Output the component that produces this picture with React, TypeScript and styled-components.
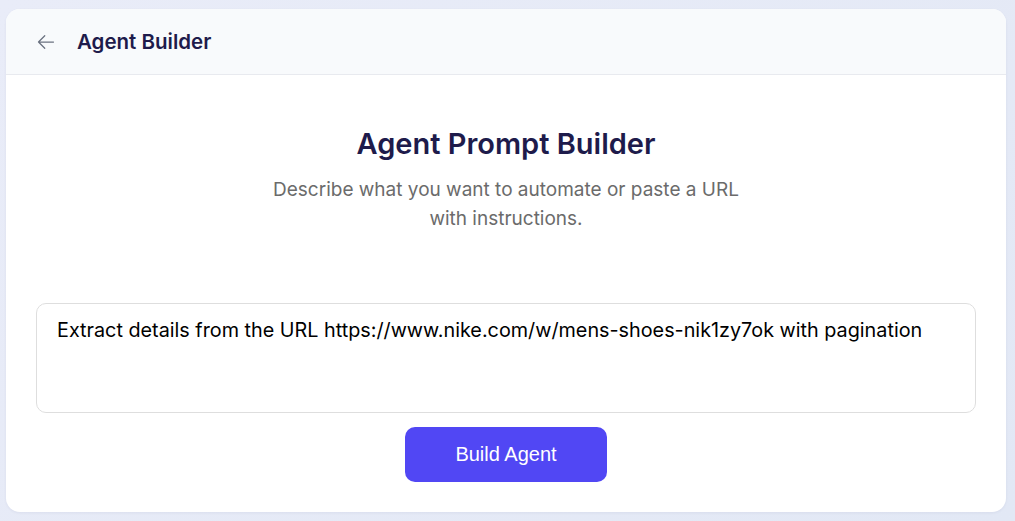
import React, { useState } from 'react';
import styled, { createGlobalStyle } from 'styled-components';

const GlobalStyle = createGlobalStyle`
  * {
    box-sizing: border-box;
  }

  html, body {
    margin: 0;
    padding: 0;
    height: 100%;
  }

  body {
    font-family: Inter, "Noto Sans", sans-serif;
    background: linear-gradient(135deg, #e9ecf8 0%, #e2e8f5 100%);
  }
`;

const Page = styled.div`
  min-height: 521px;
  padding: 9px 9px 9px 6px;
  display: flex;
`;

const Card = styled.div`
  flex: 1;
  display: flex;
  flex-direction: column;
  background: #ffffff;
  border-radius: 14px;
  overflow: hidden;
  box-shadow: 0 1px 3px rgba(30, 41, 90, 0.06);
`;

const Header = styled.header`
  height: 66px;
  display: flex;
  align-items: center;
  gap: 21px;
  padding: 0 30px;
  background: #f8fafc;
  border-bottom: 1px solid #e8eaef;
`;

const BackButton = styled.button`
  display: flex;
  align-items: center;
  justify-content: center;
  padding: 0;
  border: none;
  background: none;
  color: #6b7280;
  cursor: pointer;
`;

const HeaderTitle = styled.h1`
  margin: 0;
  font-size: 20.5px;
  font-weight: 600;
  color: #1e1b4b;
`;

const Body = styled.main`
  display: flex;
  flex-direction: column;
  align-items: center;
  padding: 52px 30px 30px;
`;

const Title = styled.h2`
  margin: 0;
  font-size: 29px;
  line-height: 34px;
  font-weight: 600;
  color: #1e1b4b;
`;

const Subtitle = styled.p`
  margin: 14px 0 0;
  max-width: 500px;
  text-align: center;
  font-size: 19px;
  line-height: 29px;
  color: #6b6b6b;
`;

const PromptInput = styled.textarea`
  width: 100%;
  height: 110px;
  margin-top: 70px;
  padding: 14px 20px;
  border: 1px solid #dedede;
  border-radius: 10px;
  resize: none;
  outline: none;
  font-family: Inter, "Noto Sans", sans-serif;
  font-size: 19.8px;
  line-height: 24px;
  color: #000000;
  background: #ffffff;
`;

const BuildButton = styled.button`
  margin-top: 14px;
  width: 202px;
  height: 55px;
  border: none;
  border-radius: 10px;
  background: #5147f4;
  color: #ffffff;
  font-family: "Liberation Sans", Arial, sans-serif;
  font-size: 20px;
  cursor: pointer;
`;

const ArrowLeft = () => (
  <svg width="20" height="20" viewBox="0 0 24 24" fill="none" stroke="currentColor" strokeWidth={1.5}>
    <path strokeLinecap="round" strokeLinejoin="round" d="M10.5 19.5 3 12m0 0 7.5-7.5M3 12h18" />
  </svg>
);

const App: React.FC = () => {
  const [prompt, setPrompt] = useState(
    'Extract details from the URL https://www.nike.com/w/mens-shoes-nik1zy7ok with pagination'
  );

  return (
    <>
      <GlobalStyle />
      <Page>
        <Card>
          <Header>
            <BackButton aria-label="Back">
              <ArrowLeft />
            </BackButton>
            <HeaderTitle>Agent Builder</HeaderTitle>
          </Header>
          <Body>
            <Title>Agent Prompt Builder</Title>
            <Subtitle>
              Describe what you want to automate or paste a URL with instructions.
            </Subtitle>
            <PromptInput value={prompt} onChange={(e) => setPrompt(e.target.value)} />
            <BuildButton>Build Agent</BuildButton>
          </Body>
        </Card>
      </Page>
    </>
  );
};

export default App;
